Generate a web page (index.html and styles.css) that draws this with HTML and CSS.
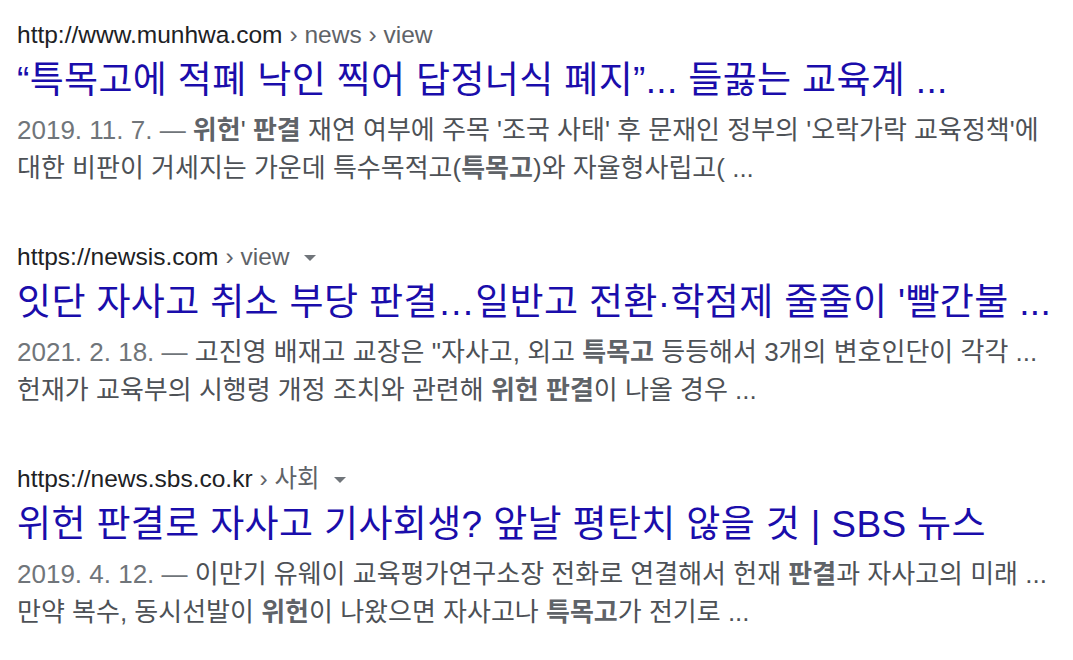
FILE: index.html
```html
<!DOCTYPE html>
<html lang="ko">
<head>
  <meta charset="UTF-8">
  <title>검색 결과</title>
  <link rel="stylesheet" href="styles.css">
</head>
<body>

  <div class="results">
    <div class="result">
      <div class="url">http://www.munhwa.com <span class="crumb">› news › view</span></div>
      <a class="title" href="#">“특목고에 적폐 낙인 찍어 답정너식 폐지”... 들끓는 교육계 ...</a>
      <div class="snippet">
        <span class="date">2019. 11. 7. — </span><b>위헌</b>' <b>판결</b> 재연 여부에 주목 '조국 사태' 후 문재인 정부의 '오락가락 교육정책'에<br>대한 비판이 거세지는 가운데 특수목적고(<b>특목고</b>)와 자율형사립고( ...
      </div>
    </div>

    <div class="result">
      <div class="url">https://newsis.com <span class="crumb">› view</span><span class="arrow"></span></div>
      <a class="title" href="#">잇단 자사고 취소 부당 판결…일반고 전환·학점제 줄줄이 '빨간불 ...</a>
      <div class="snippet">
        <span class="date">2021. 2. 18. — </span>고진영 배재고 교장은 "자사고, 외고 <b>특목고</b> 등등해서 3개의 변호인단이 각각 ...<br>헌재가 교육부의 시행령 개정 조치와 관련해 <b>위헌 판결</b>이 나올 경우 ...
      </div>
    </div>

    <div class="result">
      <div class="url">https://news.sbs.co.kr <span class="crumb">› 사회</span><span class="arrow"></span></div>
      <a class="title" href="#">위헌 판결로 자사고 기사회생? 앞날 평탄치 않을 것 | SBS 뉴스</a>
      <div class="snippet">
        <span class="date">2019. 4. 12. — </span>이만기 유웨이 교육평가연구소장 전화로 연결해서 헌재 <b>판결</b>과 자사고의 미래 ...<br>만약 복수, 동시선발이 <b>위헌</b>이 나왔으면 자사고나 <b>특목고</b>가 전기로 ...
      </div>
    </div>
  </div>

</body>
</html>
```

FILE: styles.css
```css
body {
  margin: 0;
  padding: 0;
  background: #fff;
  font-family: 'Liberation Sans', Arial, 'Noto Sans CJK KR', sans-serif;
}

.results {
  padding: 20px 0 0 17px;
}

.result {
  margin-bottom: 55px;
}

.url {
  font-size: 24.5px;
  line-height: 30px;
  color: #202124;
  display: flex;
  align-items: center;
  white-space: nowrap;
}

.url .crumb {
  color: #5f6368;
  margin-left: 7px;
}

.arrow {
  width: 0;
  height: 0;
  border-left: 6px solid transparent;
  border-right: 6px solid transparent;
  border-top: 6px solid #70757a;
  margin-left: 14px;
  margin-top: 2px;
}

.title {
  display: block;
  margin-top: 10px;
  font-size: 37px;
  line-height: 42px;
  letter-spacing: 0.35px;
  color: #1a0dab;
  text-decoration: none;
  white-space: nowrap;
}

.snippet {
  margin-top: 9px;
  font-size: 26px;
  line-height: 38px;
  color: #4d5156;
  white-space: nowrap;
}

.snippet .date {
  color: #70757a;
}

.snippet b {
  color: #5f6368;
}
```
